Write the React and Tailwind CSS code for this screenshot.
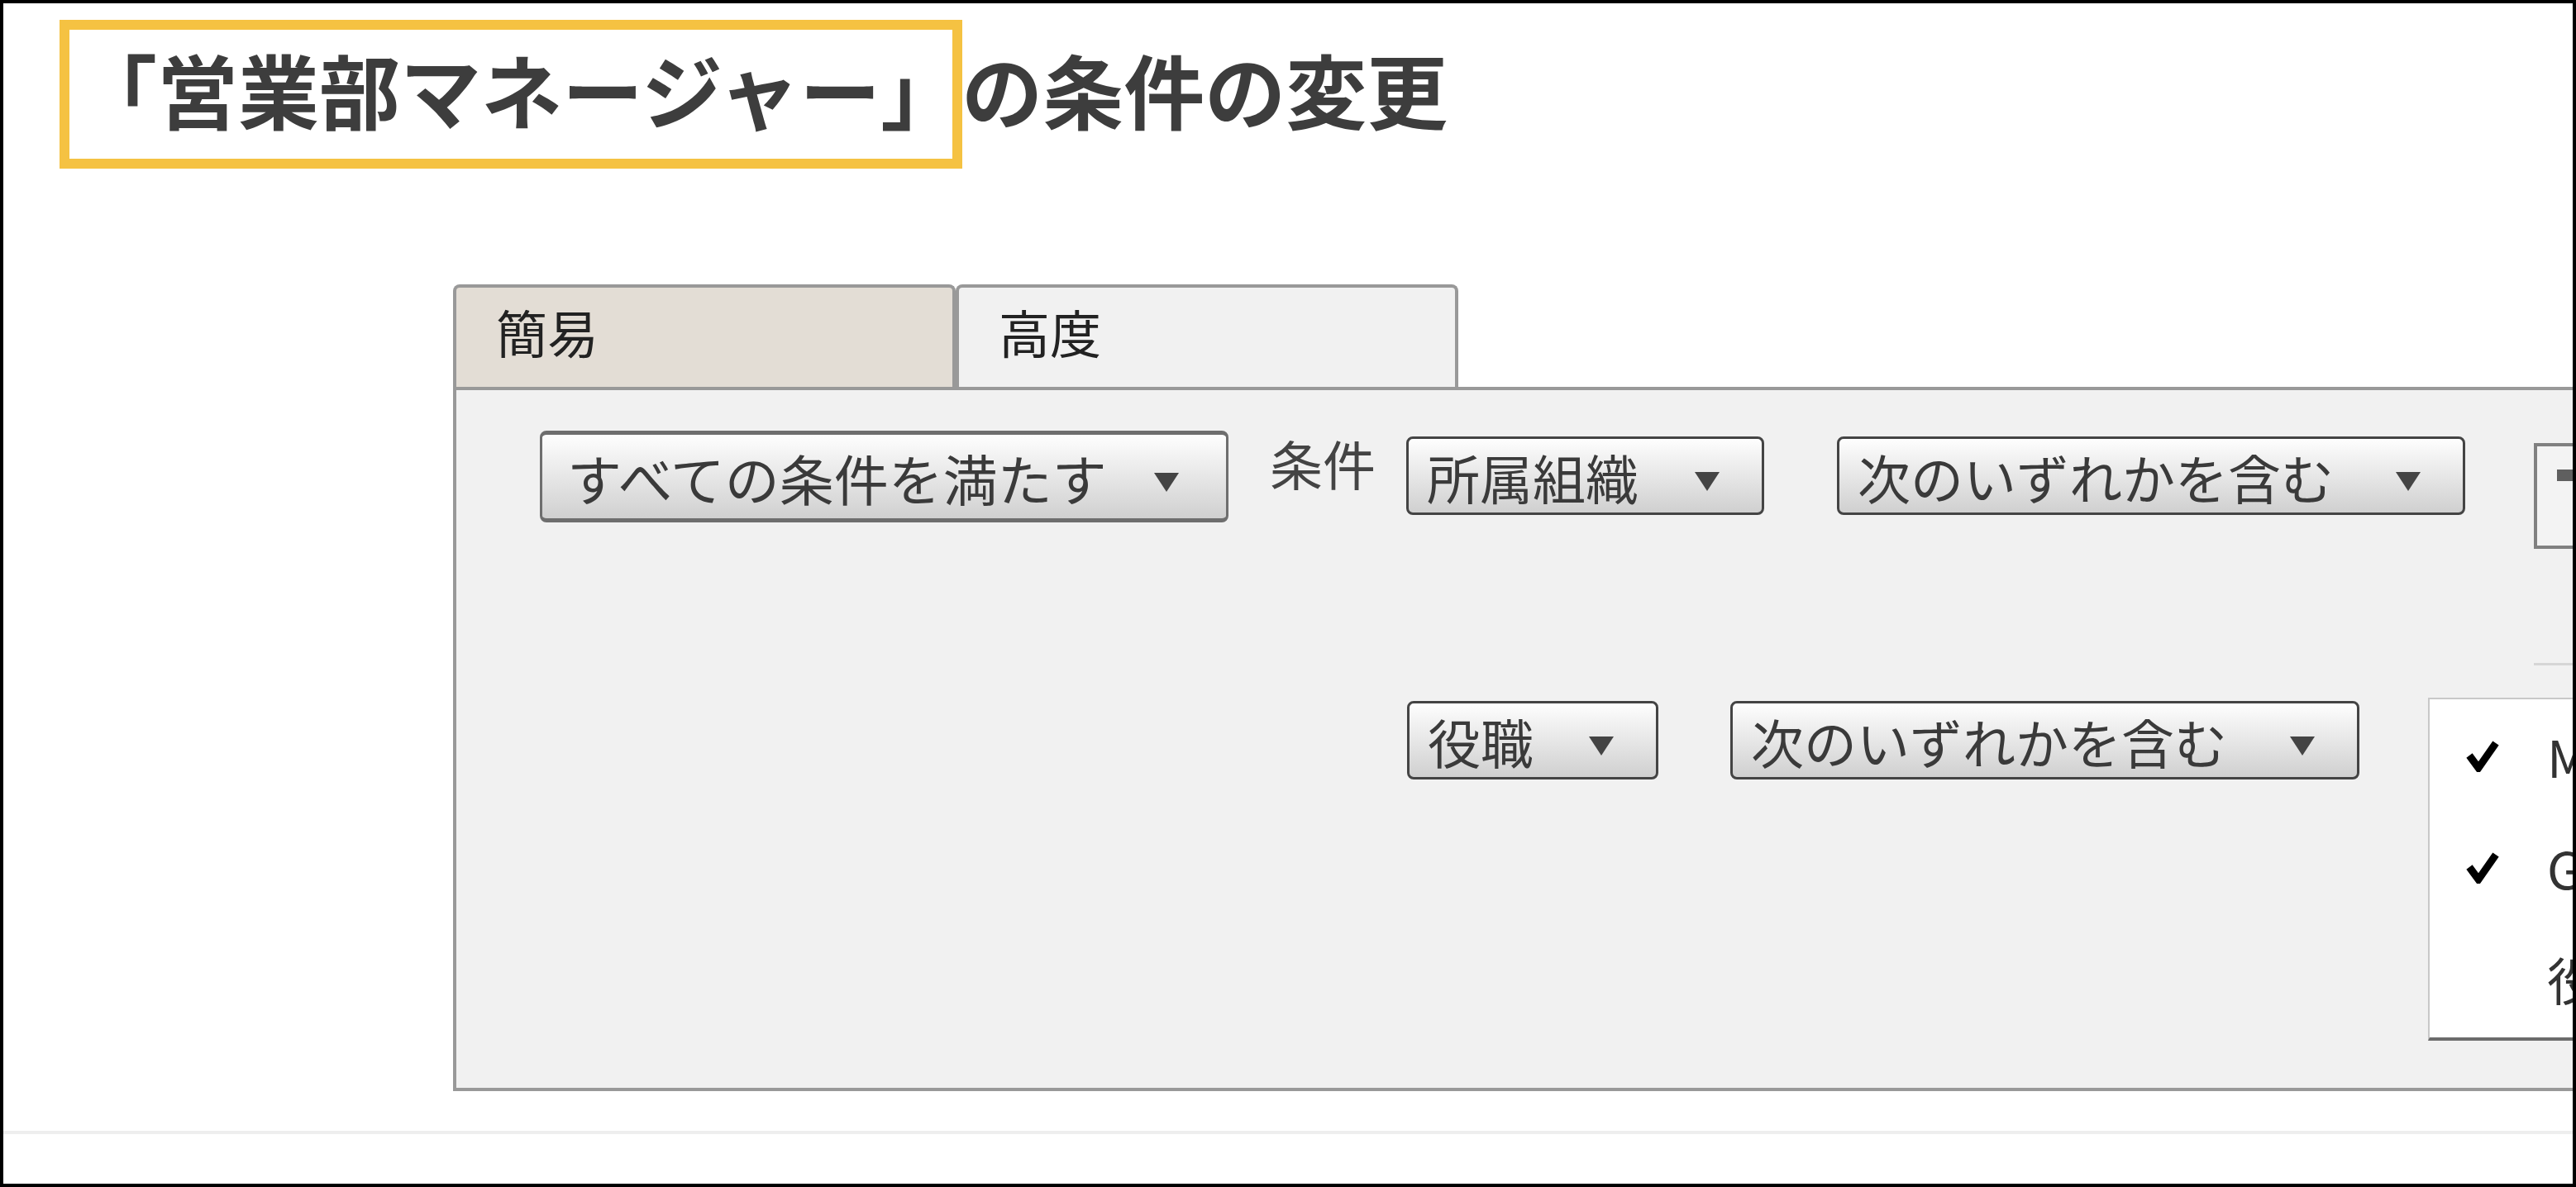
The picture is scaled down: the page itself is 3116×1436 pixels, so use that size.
import React from 'react';

// condition editor: title with highlight, tabs, rule rows
const font = "font-['Noto_Sans_CJK_JP','Noto_Sans',sans-serif]";

function Arrow() {
  return (
    <svg width="32" height="26" viewBox="0 0 32 26" className="shrink-0">
      <polygon points="1,2 31,2 16,25" fill="#444" />
    </svg>
  );
}

function Select({ label, w, h = 'h-[95px]', extra = '', arrowGap = 'mr-[50px]', size = 'text-[64px]' }) {
  return (
    <div
      className={`${w} ${h} ${extra} flex items-center justify-between rounded-[8px] bg-gradient-to-b from-[#fefefe] to-[#d0d0d0] shrink-0`}
    >
      <span className={`${size} leading-none text-[#3a3a3a] pl-[22px] whitespace-nowrap`}>{label}</span>
      <span className={`${arrowGap} mt-[12px]`}>
        <Arrow />
      </span>
    </div>
  );
}

function Check() {
  return (
    <svg width="40" height="40" viewBox="0 0 40 40">
      <path d="M4 20 L15 35 L36 5" fill="none" stroke="#000" strokeWidth="9" strokeLinejoin="miter" />
    </svg>
  );
}

export default function App() {
  const items = [
    { on: true, text: 'Manager' },
    { on: true, text: 'General Manager' },
    { on: false, text: '役員' },
  ];

  return (
    <div className={`w-[3116px] h-[1436px] border-4 border-black bg-white overflow-hidden ${font}`}>
      {/* title */}
      <div className="relative pt-[53px] pl-[88px]">
        <h1 className="text-[98px] leading-none font-bold text-[#3d3d3d] whitespace-nowrap">
          「営業部マネージャー」の条件の変更
        </h1>
        <div className="absolute left-[68px] top-[20px] w-[1092px] h-[180px] border-[12px] border-[#f5c242]" />
      </div>

      {/* tabs */}
      <div className="ml-[544px] mt-[189px] flex">
        <div className="w-[608px] h-[124px] border-4 border-b-0 border-[#999] rounded-t-[8px] bg-[#e3ddd5] pl-[48px] pt-[22px]">
          <span className="text-[62px] leading-none text-[#222]">簡易</span>
        </div>
        <div className="w-[608px] h-[124px] border-4 border-b-0 border-[#999] rounded-t-[8px] bg-[#f1f1f1] pl-[48px] pt-[22px]">
          <span className="text-[62px] leading-none text-[#222]">高度</span>
        </div>
      </div>

      {/* panel */}
      <div className="ml-[544px] w-[2700px] h-[852px] border-t-4 border-l-4 border-b-4 border-[#999] bg-[#f1f1f1] pt-[49px] pl-[101px]">
        <div className="flex items-start">
          <Select
            label="すべての条件を満たす"
            w="w-[833px]"
            h="h-[111px]"
            size="text-[66px]"
            arrowGap="mr-[56px]"
            extra="border-x-[3px] border-y-[5px] border-[#6e6e6e] pl-[8px]"
          />
          <div className="ml-[50px] w-[165px] mt-[6px] text-[64px] leading-none text-[#444] shrink-0">条件</div>
          <div className="mt-[7px]">
            <Select label="所属組織" w="w-[433px]" extra="border-[3px] border-[#444]" />
          </div>
          <div className="mt-[7px] ml-[88px]">
            <Select label="次のいずれかを含む" w="w-[760px]" extra="border-[3px] border-[#444]" />
          </div>
          <div className="mt-[15px] ml-[83px] w-[300px] h-[128px] border-4 border-[#808080] bg-[#f3f3f3] shrink-0 pl-[24px] pt-[28px]">
            <div className="w-[40px] h-[14px] bg-[#5f5f5f]" />
          </div>
        </div>

        <div className="mt-[138px] ml-[2412px] w-[300px] h-[3px] bg-[#d6d6d6]" />

        <div className="mt-[39px] flex items-start">
          <div className="ml-[1049px] mt-[4px]">
            <Select label="役職" w="w-[304px]" extra="border-[3px] border-[#444]" />
          </div>
          <div className="ml-[87px] mt-[4px]">
            <Select label="次のいずれかを含む" w="w-[761px]" extra="border-[3px] border-[#444]" />
          </div>
          <div className="ml-[83px] w-[400px] h-[415px] border-t-2 border-l-2 border-b-4 border-t-[#c8c8c8] border-l-[#c8c8c8] border-b-[#6b6b6b] bg-white shrink-0">
            {items.map((it, i) => (
              <div key={i} className="h-[135px] flex items-center">
                <div className="w-[44px] shrink-0" />
                <div className="w-[40px] shrink-0">{it.on && <Check />}</div>
                <div className="w-[58px] shrink-0" />
                <span className="text-[62px] leading-none text-[#333] whitespace-nowrap">{it.text}</span>
              </div>
            ))}
          </div>
        </div>
      </div>

      <div className="mt-[48px] h-[4px] bg-[#eeeeee]" />
    </div>
  );
}
